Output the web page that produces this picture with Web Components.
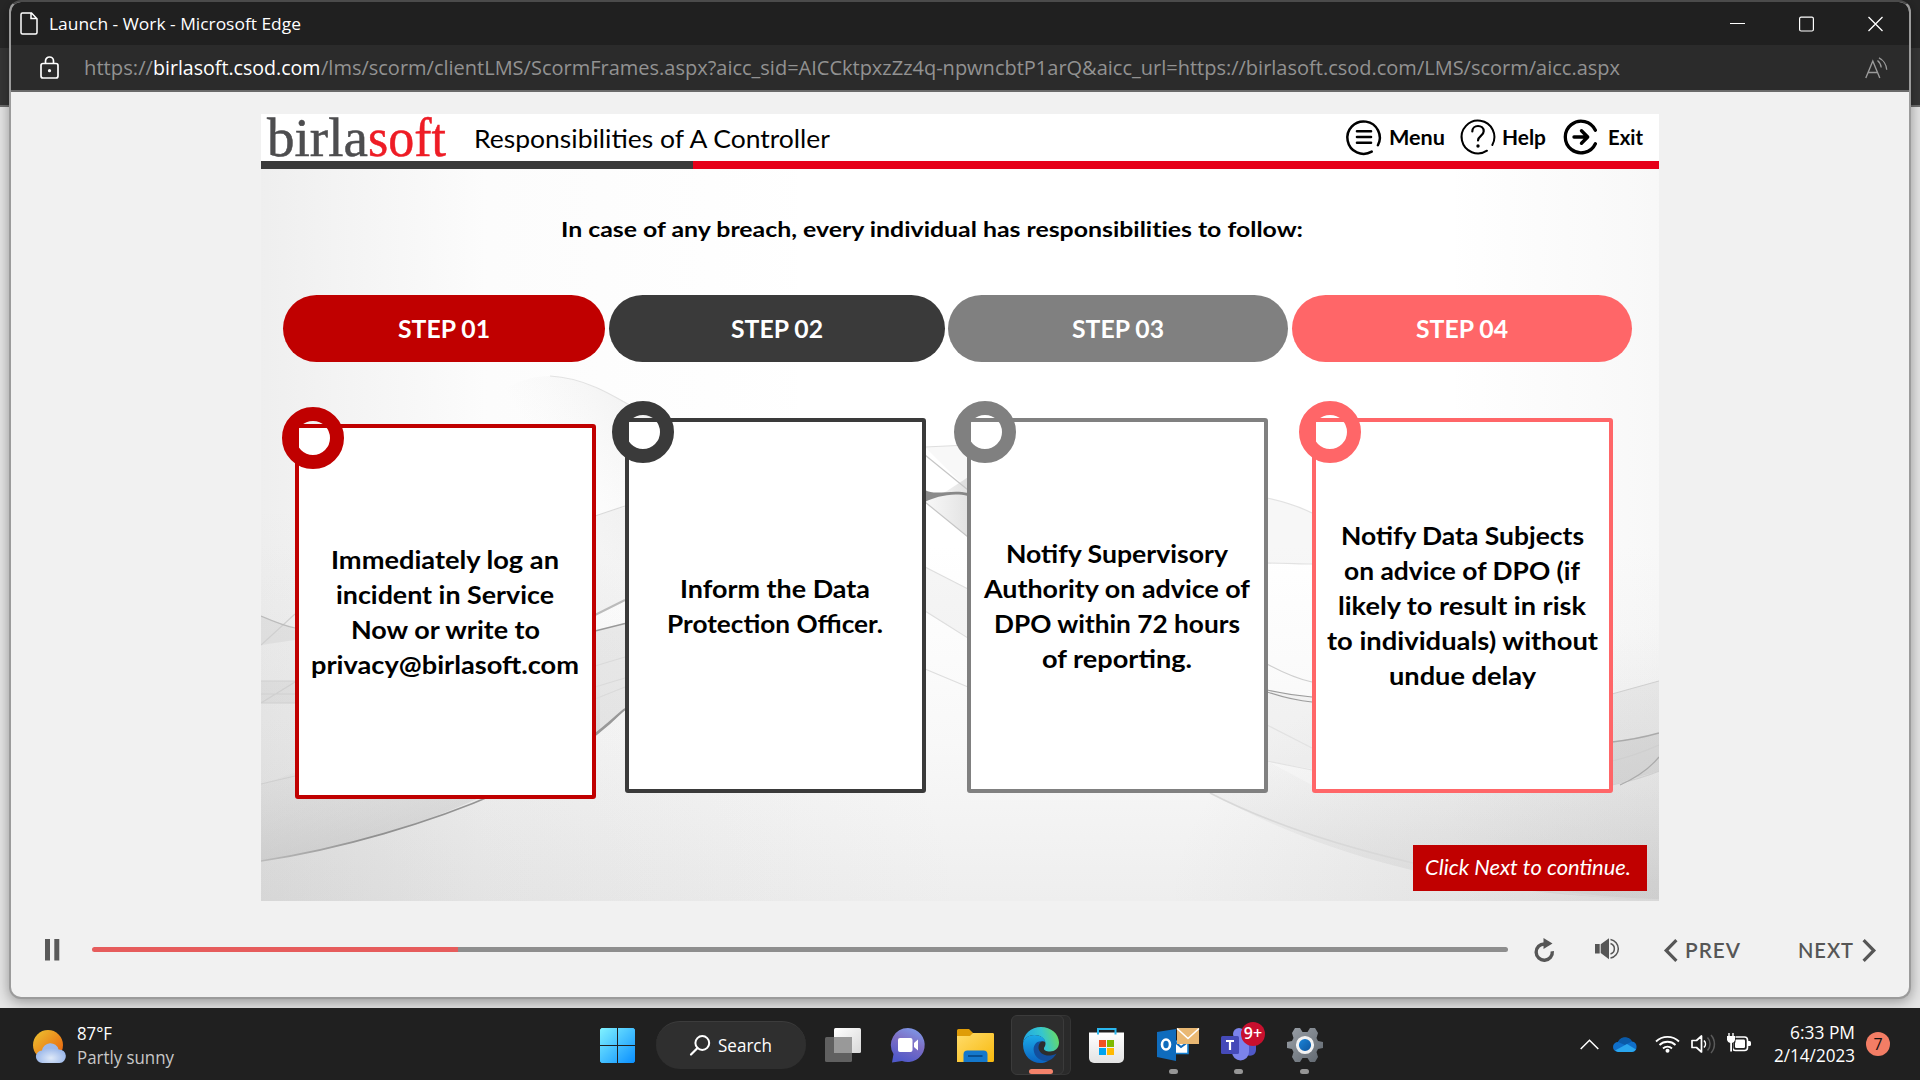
<!DOCTYPE html>
<html lang="en">
<head>
<meta charset="utf-8">
<title>Launch - Work - Microsoft Edge</title>
<style>
html,body{margin:0;width:1920px;height:1080px;overflow:hidden}
body{font-family:"Open Sans","Noto Sans",sans-serif}
</style>
</head>
<body>
<desk-top>
  <app-window>
    <course-slide></course-slide>
    <player-bar></player-bar>
  </app-window>
  <task-bar></task-bar>
</desk-top>
<script>
const ICONS = {
page:[18,23,`<path d="M3 1h8.5L17 6.700V20.500a1.500 1.500 0 0 1-1.500 1.500h-13A1.500 1.500 0 0 1 1 20.500V2.500A1.500 1.500 0 0 1 2.500 1H11v5.500H17" fill="none" stroke="#fff" stroke-width="1.500"/>`],
lock:[19,23,`<rect x="1" y="7.500" width="17" height="14.500" rx="2" fill="none" stroke="#fff" stroke-width="1.700"/><path d="M5.500 7.500V5a4 4 0 0 1 8 0v2.500" fill="none" stroke="#fff" stroke-width="1.700"/><circle cx="9.500" cy="14.700" r="1.600" fill="#fff"/>`],
min:[15,16,`<path d="M0 7.500h15" stroke="#fff" stroke-width="1.200"/>`],
max:[15,16,`<rect x=".6" y="1.200" width="13.800" height="13.800" rx="1.500" fill="none" stroke="#fff" stroke-width="1.200"/>`],
close:[15,16,`<path d="M.5 1l14 14M14.500 1l-14 14" stroke="#fff" stroke-width="1.300"/>`],
read:[23,22,`<path d="M.8 21L7.800 4l7 17M3.300 15.500h9" fill="none" stroke="#9a9a9a" stroke-width="1.400"/><path d="M12.500 3.500c2 1.700 3.500 4.300 3.700 7M14 .8c4 2 7.500 6.700 7.700 12" fill="none" stroke="#9a9a9a" stroke-width="1.300"/>`],
menu:[36,36,`<path d="M26.500 32.200A16.200 16.200 0 1 1 32.300 25.500" transform="rotate(3 18 18)" fill="none" stroke="#000" stroke-width="2.500" stroke-linecap="round"/><path d="M11 12.200h14M11 18h14M11 23.800h14" stroke="#000" stroke-width="2.600" stroke-linecap="round"/>`],
help:[36,36,`<path d="M27 31.700A16.400 16.400 0 1 1 32.300 26" fill="none" stroke="#000" stroke-width="2" stroke-linecap="round"/><path d="M12.300 12.500c0-3.500 2.500-5.500 5.700-5.500s5.700 2.100 5.700 5.200c0 4.600-5.700 4.600-5.700 9.300" fill="none" stroke="#000" stroke-width="2.200" stroke-linecap="round"/><circle cx="18" cy="27" r="1.700"/>`],
exit:[36,36,`<path d="M32.400 11.300A15.800 15.800 0 1 0 32.400 24.700" fill="none" stroke="#000" stroke-width="3.300" stroke-linecap="round"/><path d="M11 18h13M18.500 11.800l6.200 6.200-6.200 6.200" fill="none" stroke="#000" stroke-width="3.400" stroke-linecap="round" stroke-linejoin="round"/>`],
pause:[15,22,`<path d="M0 0h5v21.500H0zM9.300 0h5v21.500h-5z" fill="#595959"/>`],
replay:[21,24,`<path d="M10.500 6A8.100 8.100 0 1 0 18.300 13.200" fill="none" stroke="#565656" stroke-width="3.400"/><path d="M9.500 0v11l9-5.500z" fill="#565656"/>`],
volume:[25,22,`<path d="M0 6h4.700v9.500H0zM5.700 6.300L14 .3v21L5.700 15z" fill="#565656"/><path d="M15.500 5.500a5.500 5.500 0 0 1 0 10.500M15.500 1.400a9.500 9.500 0 0 1 0 18.700" fill="none" stroke="#565656" stroke-width="1.500"/>`],
prev:[14,23,`<path d="M12.400 1.200L2.200 11.500l10.200 10.300" fill="none" stroke="#565656" stroke-width="3.200"/>`],
next:[14,23,`<path d="M1.600 1.200L11.800 11.500 1.600 21.800" fill="none" stroke="#565656" stroke-width="3.200"/>`],
weather:[34,34,`<defs><linearGradient id="a" x1="0" y1="0" x2="1" y2="1"><stop stop-color="#edc531"/><stop offset="1" stop-color="#e8590b"/></linearGradient><radialGradient id="b" cy=".75"><stop stop-color="#dfe9f8"/><stop offset="1" stop-color="#9db9ea"/></radialGradient></defs><circle cx="15" cy="15" r="15" fill="url(#a)"/><path d="M9.500 33a6.300 6.300 0 0 1-.5-12.600 8.500 8.500 0 0 1 16.600-1A6.800 6.800 0 0 1 26.500 33z" fill="url(#b)"/>`],
start:[35,35,`<defs><linearGradient id="a" gradientUnits="userSpaceOnUse" x1="0" y1="0" x2="35" y2="35"><stop stop-color="#80f2ff"/><stop offset="1" stop-color="#0a8fff"/></linearGradient></defs><path d="M1.500 0H17v17H0V1.500zM18 0h15.500L35 1.500V17H18zM0 18h17v17H1.500L0 33.500zM18 18h17v15.500L33.500 35H18z" fill="url(#a)"/>`],
search:[21,21,`<circle cx="12.300" cy="8" r="6.900" fill="none" stroke="#fff" stroke-width="2"/><path d="M7.500 13L1 19.500" stroke="#fff" stroke-width="2.200" stroke-linecap="round"/>`],
tasks:[36,34,`<defs><linearGradient id="a" x2="1" y2="1"><stop stop-color="#fff"/><stop offset="1" stop-color="#d8d8d8"/></linearGradient></defs><rect y="9" width="27" height="25" rx="1.500" fill="#606060"/><rect x="9" width="27" height="25" rx="1.500" fill="url(#a)"/><path d="M9 9h18v16H9z" fill="#999"/>`],
chat:[34,35,`<defs><linearGradient id="a" x1=".8" y1="0" x2=".4" y2="1"><stop stop-color="#7d9bea"/><stop offset=".45" stop-color="#7e6fc4"/><stop offset="1" stop-color="#5059c9"/></linearGradient></defs><path d="M17 0a17 17 0 1 1-6 33L1 34.500 2.500 26A17 17 0 0 1 17 0z" fill="url(#a)"/><rect x="7" y="10" width="14.500" height="14" rx="2" fill="#fff"/><path d="M23 15l4-3.500v11L23 19z" fill="#fff"/>`],
folder:[37,33,`<defs><linearGradient id="a" x2="1" y2="1"><stop stop-color="#ffdc6b"/><stop offset="1" stop-color="#f8b90d"/></linearGradient></defs><path d="M0 1.500Q0 0 1.500 0H12l4 4h19.500Q37 4 37 5.500V16H0z" fill="#df9c08"/><path d="M0 7h13l3-3h19.500Q37 4 37 5.500V31.500Q37 33 35.500 33H0z" fill="url(#a)"/><path d="M6.500 33v-7.500a4 4 0 0 1 4-4h16a4 4 0 0 1 4 4V33z" fill="#1478cc"/><path d="M11 27h14.500" stroke="#074f91" stroke-width="2"/>`],
edge:[36,36,`<defs><linearGradient id="a" x1="0" y1=".5" x2="1" y2=".3"><stop stop-color="#1ea5e5"/><stop offset=".55" stop-color="#35c6cf"/><stop offset="1" stop-color="#6bdc5f"/></linearGradient><linearGradient id="b" x2="0" y2="1"><stop stop-color="#1baae8"/><stop offset="1" stop-color="#0b63c0"/></linearGradient></defs><path d="M0 17C0 7 8 0 18 0s18 7 18 15.500c0 6-4.500 9-9 9-4 0-6.500-1.500-6-3.500.5-1.300 1.500-2 1.500-4.500C22 11 17 8 11.500 8 5 8 0 12 0 17z" fill="url(#a)"/><path d="M0 17C0 12 5 8 11.500 8 17 8 22 11 22.300 15c-2.500-2-8-.5-9 6C12.500 28 18 34 26 33.500 16 40 0 34 0 17z" fill="url(#b)"/><path d="M18.500 14.300C13 14 9.500 19 11 25c1.700 7 8.500 10 15 8.500 3.500-1.500 6-4.500 7.500-7-8 4.500-17.500 1-18-5.500-.1-3 1.200-5.200 3-6.700z" fill="#134f9d"/>`],
store:[35,35,`<defs><linearGradient id="a" x2="0" y2="1"><stop stop-color="#fff"/><stop offset="1" stop-color="#e3e3e3"/></linearGradient></defs><path d="M0 4.500h35V30a5 5 0 0 1-5 5H5a5 5 0 0 1-5-5z" fill="url(#a)"/><path d="M9 6.500V1h17.500v5.500" fill="none" stroke="#2ab7ef" stroke-width="2"/><path d="M10 12h7v7h-7z" fill="#f25022"/><path d="M18 12h7v7h-7z" fill="#7fba00"/><path d="M10 20h7v7h-7z" fill="#00a4ef"/><path d="M18 20h7v7h-7z" fill="#ffb900"/>`],
outlook:[42,33,`<path d="M17 13h14v12.500H17z" fill="#fff" stroke="#1580d2" stroke-width="1.600"/><path d="M18 14l6 5 7-5" fill="none" stroke="#0f6cbd" stroke-width="2"/><path d="M0 4L19 1v32L0 29z" fill="#0f6cbd"/><ellipse cx="9" cy="16.500" rx="4" ry="5" fill="none" stroke="#fff" stroke-width="2.600"/><path d="M20 0h22v16H20z" fill="#e9b873"/><path d="M20 .5l11 10 11-10" fill="none" stroke="#fff" stroke-width="1.600"/>`],
teams:[36,33,`<circle cx="18" cy="6" r="6" fill="#7b83eb"/><path d="M26 11h9v11a6 6 0 0 1-9 5z" fill="#5059c9"/><path d="M11 10h17v14a8.500 8.500 0 0 1-17 0z" fill="#7b83eb"/><rect y="8" width="18" height="18" rx="1.500" fill="#454ab8"/><path d="M5 13h8M9 13v9" stroke="#fff" stroke-width="2.200"/>`],
gear:[36,34,`<defs><linearGradient id="a" x2="1" y2="1"><stop stop-color="#9ba1a8"/><stop offset="1" stop-color="#5f666e"/></linearGradient><linearGradient id="b" x2="1" y2="1"><stop stop-color="#1b8ae0"/><stop offset="1" stop-color="#0d4f96"/></linearGradient></defs><path d="M8 0h5l2.500 4h5L23 0h5l3 5-1.500 5 1.500 3 5 1v6l-5 1-1.500 3L31 29l-3 5h-5l-2.500-4h-5L13 34H8l-3-5 1.500-5L5 21l-5-1v-6l5-1 1.500-3L5 5z" fill="url(#a)"/><circle cx="18" cy="17" r="7.600" fill="url(#b)" stroke="#f2f2f2" stroke-width="3"/>`],
up:[19,11,`<path d="M.7 10L9.500 1.200 18.300 10" fill="none" stroke="#fff" stroke-width="1.500"/>`],
cloud:[24,16,`<path d="M5 16A5 5 0 0 1 5 6 8 8 0 0 1 19 5.500 5.300 5.300 0 0 1 19 16z" fill="#0f6fca"/><path d="M5 6A8 8 0 0 1 19 5.500L12 9z" fill="#0a5aa8"/><path d="M2 14.500L14 8l9 5.500A5 5 0 0 1 19 16H5z" fill="#2aa6ee"/>`],
wifi:[25,18,`<path d="M1 6.500a16.500 16.500 0 0 1 23 0M4.500 10a11.500 11.500 0 0 1 16 0M8 13.500a6.500 6.500 0 0 1 9 0" fill="none" stroke="#fff" stroke-width="1.800"/><circle cx="12.500" cy="15.800" r="2" fill="#fff"/>`],
sound:[25,20,`<path d="M1 6.500h4.500L10.500 2v16l-5-4.500H1z" fill="none" stroke="#fff" stroke-width="1.700" stroke-linejoin="round"/><path d="M13 6.500a5 5 0 0 1 0 7" fill="none" stroke="#fff" stroke-width="1.600"/><path d="M16.500 3.500a9.500 9.500 0 0 1 0 13M20 1a13.500 13.500 0 0 1 0 18" fill="none" stroke="#5a5a5a" stroke-width="1.500"/>`],
battery:[25,20,`<rect x="5.500" y="4" width="15" height="13.500" rx="3" fill="none" stroke="#fff" stroke-width="1.600"/><rect x="8" y="6.500" width="10" height="8.500" rx="1.200" fill="#fff"/><path d="M21 8h1.500a1.500 1.500 0 0 1 1.500 1.500v2a1.500 1.500 0 0 1-1.500 1.500H21z" fill="#fff"/><path d="M-.5-1h9v10.500H6V19H2V9.500H-.5z" fill="#202020"/><path d="M0 3h8v4a4 4 0 0 1-3 3v8.500H3.200V10A4 4 0 0 1 0 7z" fill="#fff"/><path d="M2 0v4M6 0v4" stroke="#fff" stroke-width="1.400"/>`]
};

function define(name, markup, setup){
  const t = document.createElement('template');
  t.innerHTML = markup;
  customElements.define(name, class extends HTMLElement{
    constructor(){ super(); this.attachShadow({mode:'open'}); }
    connectedCallback(){
      if(this.shadowRoot.childNodes.length) return;
      this.shadowRoot.append(t.content.cloneNode(true));
      if(setup) setup(this, this.shadowRoot);
    }
  });
}

define('desk-top', `<style>
:host{display:flex;flex-direction:column;width:1920px;height:1080px;overflow:hidden;
background:linear-gradient(#272727 0 48px,#363636 48px 105px,#6d6d6d 105px 107px,#e6e6e6 107px)}
</style><slot></slot>`);

define('app-window', `<style>
:host{display:flex;flex-direction:column;box-sizing:border-box;width:1902px;height:999px;margin:0 0 9px 9px;
border:2px solid #9b9b9b;border-top-color:#4b4b4b;border-radius:12px;background:#f1f1f1;overflow:hidden;
box-shadow:0 3px 14px rgba(0,0,0,.36)}
.title{display:flex;align-items:center;height:43px;background:#202020;color:#fff;font-size:17.200px;line-height:43px;padding:0 26px 0 9px}
.title fit-text{margin-left:11px}
.win{margin-left:auto;display:flex;gap:54px}
.addr{display:flex;align-items:center;height:45px;background:#2b2b2b;border-bottom:2px solid #6a6a6a;color:#929292;font-size:20.500px;line-height:45px;padding:0 21px 0 29px;flex:none}
.url{display:flex;margin-left:25px}
.url b{font-weight:400;color:#fff}
.read{margin-left:auto}
main{display:flex;flex-direction:column;flex:1}
</style>
<div class="title"><ui-icon name="page"></ui-icon><fit-text w="252">Launch - Work - Microsoft Edge</fit-text>
<div class="win"><ui-icon name="min"></ui-icon><ui-icon name="max"></ui-icon><ui-icon name="close"></ui-icon></div></div>
<div class="addr"><ui-icon name="lock"></ui-icon><div class="url"><fit-text w="69">https://</fit-text><b><fit-text w="167.500">birlasoft.csod.com</fit-text></b><fit-text w="1299">/lms/scorm/clientLMS/ScormFrames.aspx?aicc_sid=AICCktpxzZz4q-npwncbtP1arQ&amp;aicc_url=https://birlasoft.csod.com/LMS/scorm/aicc.aspx</fit-text></div><ui-icon class="read" name="read"></ui-icon></div>
<main><slot></slot></main>`);

define('slide-backdrop', `<style>:host{display:block}svg{display:block}</style>
<svg width="1398" height="787" viewBox="261 114 1398 787">
<defs>
<linearGradient id="base" x2="0" y2="1"><stop offset=".55" stop-color="#fff"/><stop offset=".8" stop-color="#f8f8f8"/><stop offset="1" stop-color="#eee"/></linearGradient>
<linearGradient id="side" x2="1"><stop stop-color="#999" stop-opacity=".16"/><stop offset=".16" stop-color="#999" stop-opacity=".03"/><stop offset=".4" stop-color="#999" stop-opacity="0"/><stop offset=".85" stop-color="#999" stop-opacity="0"/><stop offset="1" stop-color="#999" stop-opacity=".07"/></linearGradient>
<radialGradient id="corner" cx="0" cy="1" r=".5"><stop stop-color="#999" stop-opacity=".14"/><stop offset="1" stop-color="#999" stop-opacity="0"/></radialGradient>
<radialGradient id="corner2" cx="1" cy="1" r=".35"><stop stop-color="#999" stop-opacity=".2"/><stop offset="1" stop-color="#999" stop-opacity="0"/></radialGradient>
<linearGradient id="w1" gradientUnits="userSpaceOnUse" x1="380" y1="700" x2="420" y2="830"><stop stop-color="#bbb" stop-opacity="0"/><stop offset="1" stop-color="#999" stop-opacity=".22"/></linearGradient>
<linearGradient id="w4" gradientUnits="userSpaceOnUse" x1="1400" y1="700" x2="1400" y2="890"><stop stop-color="#bbb" stop-opacity="0"/><stop offset="1" stop-color="#999" stop-opacity=".2"/></linearGradient>
<linearGradient id="w3" gradientUnits="userSpaceOnUse" x1="640" y1="390" x2="540" y2="450"><stop stop-color="#999" stop-opacity=".12"/><stop offset="1" stop-color="#bbb" stop-opacity="0"/></linearGradient>
<linearGradient id="k" gradientUnits="userSpaceOnUse" x1="925" y1="0" x2="968" y2="0"><stop stop-color="#aaa" stop-opacity=".12"/><stop offset="1" stop-color="#999" stop-opacity=".4"/></linearGradient>
<linearGradient id="l1" x1="0" x2="1"><stop stop-color="#bbb"/><stop offset=".3" stop-color="#909090"/><stop offset="1" stop-color="#999"/></linearGradient>
</defs>
<path d="M261 114h1398v787H261z" fill="url(#base)"/>
<path d="M261 114h1398v787H261z" fill="url(#side)"/>
<path d="M261 114h1398v787H261z" fill="url(#corner)"/>
<path d="M261 114h1398v787H261z" fill="url(#corner2)"/>
<path d="M468 424C485 395 520 376 550 376C590 378 640 408 700 450V560H468z" fill="url(#w3)"/>
<path d="M261 784C370 750 480 690 600 640V733C500 795 400 840 261 861z" fill="url(#w1)"/>
<path d="M595 516L625 507V600L595 615z" fill="#aaa" opacity=".1"/><path d="M595 631L625 624V709L595 735z" fill="#aaa" opacity=".2"/>
<path d="M261 681H295V703H261zM261 616C275 622 285 625 295 627V640L261 645z" fill="#999" opacity=".13"/>
<path d="M925 447L968 445V490z" fill="#aaa" opacity=".08"/>
<path d="M925 502C940 496 955 486 968 477V537z" fill="url(#k)" opacity=".7"/>
<path d="M925 567L968 589V637L925 611z" fill="#aaa" opacity=".1"/>
<path d="M1210 793C1350 870 1500 895 1659 900V771L1612 785H1312L1267 761V793z" fill="url(#w4)" opacity=".8"/>
<path d="M1267 498C1285 502 1300 507 1312 513V564H1267zM1267 690L1312 697V769L1267 761z" fill="#aaa" opacity=".09"/>
<path d="M1612 694L1659 681V733L1612 742z" fill="#aaa" opacity=".14"/>
<path d="M1612 742L1659 733V771L1612 785z" fill="#999" opacity=".25"/>
<g fill="none" stroke="#cfcfcf" stroke-width="1.200">
<path d="M261 861C340 849 430 823 500 792C550 770 590 744 625 709" stroke="url(#l1)" stroke-width="1.600"/>
<path d="M550 376C590 378 620 400 655 420" stroke="#e2e2e2"/>
<path d="M261 784L295 776M261 645L295 614M261 703L295 682M261 681H295M261 694H295M261 703H295"/>
<path d="M261 616C275 622 285 626 295 628" stroke="#bbb"/>
<path d="M595 516L625 506M595 666L625 657M595 687L625 678M595 699L625 687" stroke="#dadada"/>
<path d="M595 615L625 600" stroke="#bbb" stroke-width="2"/><path d="M595 631L625 623.500" stroke="#999" stroke-width="1.600"/>
<path d="M595 734C606 726 616 716 625 709" stroke="#999" stroke-width="2"/>
<path d="M925 447L968 445M925 567L968 589M925 611L968 638M925 669L968 687" stroke="#dedede"/>
<path d="M925 455L968 490M925 502L968 537" stroke="#c6c6c6"/>
<path d="M1267 498C1285 502 1300 507 1312 513M1267 563C1285 563 1300 564 1312 564M1267 725L1312 748M1267 761L1312 770" stroke="#e2e2e2"/>
<path d="M1267 664C1282 672 1298 679 1312 682"/>
<path d="M1267 690C1285 694 1300 696 1312 697M1267 692C1285 698 1300 701 1312 702" stroke="#9c9c9c" stroke-width="1.200"/>
<path d="M1612 742C1630 740 1645 737 1659 733" stroke="#aaa" stroke-width="1.600"/>
<path d="M1612 694L1659 681M1612 761C1630 757 1645 751 1659 745M1612 785C1630 781 1645 777 1659 771"/>
<path d="M1620 785C1638 777 1650 768 1659 757" stroke="#aaa"/>
<path d="M1210 793C1270 824 1340 846 1413 863C1490 884 1580 898 1659 900" stroke="#d8d8d8" stroke-width="1.600"/>
</g>
<path d="M925 490C935 496 952 489 968 493V496C952 492 935 497 925 502z" fill="#777" opacity=".85"/>
</svg>`);

define('step-pill', `<style>
:host{display:flex;justify-content:center;align-items:center;height:67px;border-radius:34px;background:var(--c);color:#fff;font:700 25px/35px Lato,"Open Sans",sans-serif;flex:none}
</style><fit-text w="92"><slot></slot></fit-text>`);

define('step-card', `<style>
:host{display:flex;flex-direction:column;align-items:center;justify-content:center;position:relative;box-sizing:border-box;width:300.500px;height:375px;flex:none;
border:4.600px solid var(--c);border-radius:3px;background:#fff;font:700 25.500px/35px Lato,"Open Sans",sans-serif;color:#000}
i{position:absolute;left:-17px;top:-21.500px;box-sizing:border-box;width:62px;height:62px;border:14px solid var(--c);border-radius:50%}
</style><slot></slot><i></i>`);

define('course-slide', `<style>
:host{display:flex;flex-direction:column;position:relative;width:1398px;height:787px;margin:22px 0 0 250px;flex:none}
slide-backdrop{position:absolute;inset:0}
header{display:flex;align-items:center;box-sizing:border-box;height:47px;background:#fff;padding:0 16px 2px 6px;position:relative}
.logo{display:flex;font:54px/46px "Liberation Serif",serif;margin-top:2px;-webkit-text-stroke:.5px}
.logo fit-text{color:#4d4d4f}.logo fit-text+fit-text{color:#ee1c25}
.name{font:25px/40px Lato,"Open Sans",sans-serif;margin:2px 0 0 28px}
nav{display:flex;align-items:center;margin-left:auto;font:700 20px/36px Lato,"Open Sans",sans-serif}
.rule{height:8px;background:linear-gradient(90deg,#3a3a3a 432px,#e60019 432px);position:relative}
.body{display:flex;flex-direction:column;position:relative}
h1{margin:40px 0 0 299.500px;font:700 21.300px/40px Lato,"Open Sans",sans-serif;font-variant-ligatures:none;color:#000}
.pills{display:flex;margin:46px 0 0 22px}
.cards{display:flex;align-items:flex-start;margin:56px 0 0 34px}
.hint{display:flex;justify-content:center;align-items:center;box-sizing:border-box;width:234px;height:46px;padding:0 4px 3px 0;margin:46px 12px 0 auto;background:#c00000;color:#fff;font:italic 21px/30px Lato,"Open Sans",sans-serif}
</style>
<slide-backdrop></slide-backdrop>
<header><div class="logo"><fit-text w="101">birla</fit-text><fit-text w="78">soft</fit-text></div>
<fit-text class="name" w="356">Responsibilities of A Controller</fit-text>
<nav><ui-icon name="menu"></ui-icon><fit-text w="56" style="margin-left:7px">Menu</fit-text>
<ui-icon name="help" style="margin-left:15px"></ui-icon><fit-text w="44" style="margin-left:6px">Help</fit-text>
<ui-icon name="exit" style="margin-left:17.500px"></ui-icon><fit-text w="35" style="margin-left:9px">Exit</fit-text></nav></header>
<div class="rule"></div>
<div class="body">
<h1><fit-text w="742">In case of any breach, every individual has responsibilities to follow:</fit-text></h1>
<div class="pills">
<step-pill style="--c:#c00000;width:322px">STEP 01</step-pill>
<step-pill style="--c:#3a3a3a;width:336px;margin-left:4px">STEP 02</step-pill>
<step-pill style="--c:#808080;width:340px;margin-left:3px">STEP 03</step-pill>
<step-pill style="--c:#ff6668;width:340px;margin-left:4px">STEP 04</step-pill></div>
<div class="cards">
<step-card style="--c:#c00000;margin-top:6px"><fit-text w="228">Immediately log an</fit-text><fit-text w="218">incident in Service</fit-text><fit-text w="189">Now or write to</fit-text><fit-text w="268">privacy@birlasoft.com</fit-text></step-card>
<step-card style="--c:#3a3a3a;margin-left:29.500px"><fit-text w="190">Inform the Data</fit-text><fit-text w="216">Protection Officer.</fit-text></step-card>
<step-card style="--c:#808080;margin-left:41.500px"><fit-text w="222">Notify Supervisory</fit-text><fit-text w="266">Authority on advice of</fit-text><fit-text w="246">DPO within 72 hours</fit-text><fit-text w="150">of reporting.</fit-text></step-card>
<step-card style="--c:#ff6668;margin-left:44.500px"><fit-text w="243">Notify Data Subjects</fit-text><fit-text w="236">on advice of DPO (if</fit-text><fit-text w="248">likely to result in risk</fit-text><fit-text w="271">to individuals) without</fit-text><fit-text w="147">undue delay</fit-text></step-card></div>
<div class="hint"><fit-text w="206">Click Next to continue.</fit-text></div>
</div>`);

define('player-bar', `<style>
:host{display:flex;align-items:center;flex:1;padding:2px 33px 0 33.500px;color:#565656;font:600 21px/30px Lato,"Open Sans",sans-serif;letter-spacing:1px}
.track{width:1416px;height:5px;border-radius:3px;background:linear-gradient(90deg,#e65c5c 366px,#8e8e8e 366px);margin:0 0 2px 32.500px}
</style><ui-icon name="pause"></ui-icon><div class="track"></div>
<ui-icon name="replay" style="margin-left:26px"></ui-icon><ui-icon name="volume" style="margin:0 0 2px 40px"></ui-icon>
<ui-icon name="prev" style="margin-left:44.500px"></ui-icon><fit-text w="56" style="margin-left:7px">PREV</fit-text>
<fit-text w="56" style="margin-left:56.500px">NEXT</fit-text><ui-icon name="next" style="margin-left:8.500px"></ui-icon>`);

define('task-item', `<style>
:host{display:flex;position:relative;flex:none}
u{position:absolute;left:50%;top:41px;width:9px;height:5px;margin-left:-5px;border-radius:3px;background:#969696}
:host([name=mail]) u{margin-left:-9px}
:host(:not([running])) u{display:none}
b{position:absolute;left:20px;top:-6px;width:24px;height:24px;border-radius:50%;background:#c8102e;color:#fff;font-size:16px;font-weight:600;line-height:23px;text-align:center}
:host(:not([badge])) b{display:none}
</style><slot></slot><u></u><b></b>`, (el,r)=>{r.querySelector('b').textContent = el.getAttribute('badge')||'';});

define('task-bar', `<style>
:host{display:flex;align-items:center;height:72px;width:1920px;background:#202020;color:#fff;font-size:17.300px;flex:none;position:relative}
:host>*{flex:none}
.w{line-height:24px;margin:4px 0 0 10px}.w fit-text+fit-text{color:#c8c8c8}
.s{display:flex;align-items:center;box-sizing:border-box;width:150px;height:48px;border-radius:24px;background:#2f2f2f;border-top:1px solid #3c3c3c;margin:2px 0 0 21px;padding-left:34px;line-height:46px}
.e{display:flex;flex-direction:column;align-items:center;box-sizing:border-box;width:53px;height:60px;border:1px solid #3b3b3b;border-radius:6px;background:#2d2d2d;padding:11px 0 0 6px;margin:2px 0 0 17px;box-shadow:7px 0 0 -1px #2a2a2a,7px 0 0 0 #353535}
.e span{width:24px;height:5px;border-radius:3px;background:#f4836b;margin-top:6px}
.c{display:flex;flex-direction:column;align-items:flex-end;line-height:23.500px;margin-left:22px}
.n{width:24px;height:24px;border-radius:50%;background:#f37d65;color:#111;line-height:24px;text-align:center;font-size:16px;margin-left:11px}
</style>
<ui-icon name="weather" style="margin:5px 0 0 33px"></ui-icon>
<div class="w"><fit-text w="35">87°F</fit-text><fit-text w="97">Partly sunny</fit-text></div>
<ui-icon name="start" style="margin:3px 0 0 426px"></ui-icon>
<div class="s"><ui-icon name="search"></ui-icon><fit-text w="54" style="margin-left:7px">Search</fit-text></div>
<ui-icon name="tasks" style="margin:1px 0 0 19px"></ui-icon>
<ui-icon name="chat" style="margin:2px 0 0 30px"></ui-icon>
<ui-icon name="folder" style="margin:2px 0 0 32px"></ui-icon>
<div class="e"><ui-icon name="edge"></ui-icon><span></span></div>
<ui-icon name="store" style="margin:3px 0 0 25px"></ui-icon>
<task-item running name="mail" style="margin-left:33px"><ui-icon name="outlook"></ui-icon></task-item>
<task-item running badge="9+" style="margin:1px 0 0 22px"><ui-icon name="teams"></ui-icon></task-item>
<task-item running style="margin:2px 0 0 30px"><ui-icon name="gear"></ui-icon></task-item>
<ui-icon name="up" style="margin-left:257px"></ui-icon>
<ui-icon name="cloud" style="margin-left:14px"></ui-icon>
<ui-icon name="wifi" style="margin-left:18px"></ui-icon>
<ui-icon name="sound" style="margin-left:11px"></ui-icon>
<ui-icon name="battery" style="margin:0 0 2px 11px"></ui-icon>
<div class="c"><fit-text w="65">6:33 PM</fit-text><fit-text w="81">2/14/2023</fit-text></div>
<div class="n">7</div>`);

define('ui-icon', `<style>:host{display:block;flex:none}svg{display:block;overflow:visible}</style>`, (el,r)=>{
  const [w,h,d] = ICONS[el.getAttribute('name')];
  r.innerHTML += `<svg width="${w}" height="${h}" viewBox="0 0 ${w} ${h}">${d}</svg>`;
});

/* One line of text whose advance width is set in pixels by the w attribute. */
define('fit-text', `<style>:host{display:block;white-space:nowrap;flex:none}span{display:inline-block;transform-origin:0 50%}</style><span><slot></slot></span>`, (el,r)=>{
  const s = r.querySelector('span'), w = +el.getAttribute('w');
  const n = s.getBoundingClientRect().width;
  el.style.width = w + 'px';
  s.style.transform = `scaleX(${w/n})`;
});
</script>
</body>
</html>
